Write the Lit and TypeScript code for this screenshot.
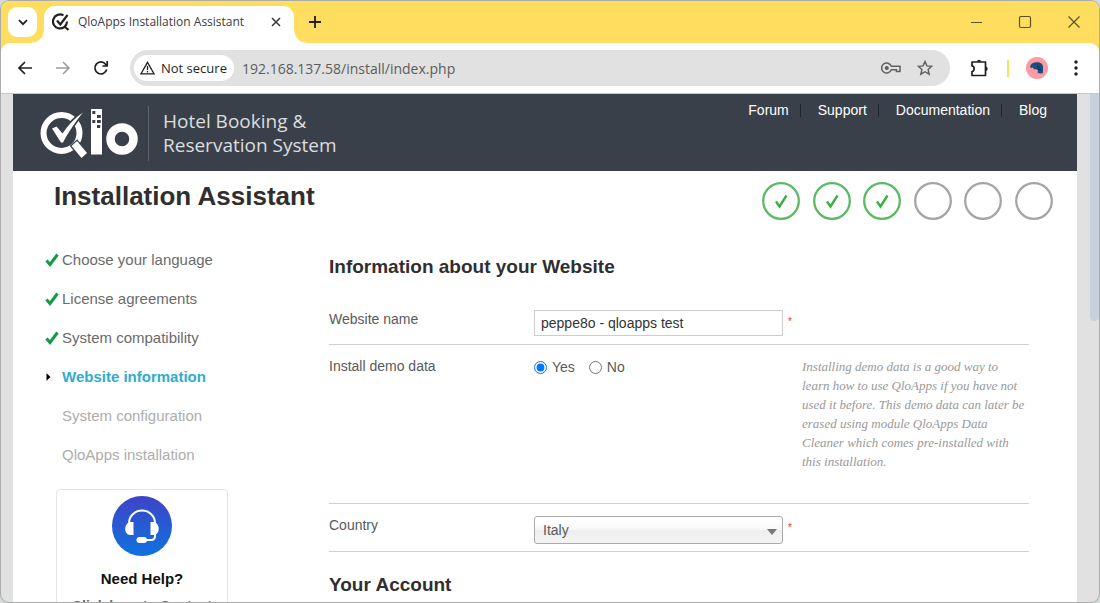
import { LitElement, html, css, svg } from "lit";
import { customElement, state } from "lit/decorators.js";

const tick = svg`<path d="M1.500 7.500L5 11.500L12.500 1.500" fill="none" stroke="#169b45" stroke-width="3"/>`;

@customElement("browser-bar")
class BrowserBar extends LitElement {
  static styles = css`
    :host { display: block; font-family: "Open Sans", "Noto Sans", sans-serif; color: #1f1f1f; background: #ffdd5f; }
    button { border: 0; padding: 0; background: none; display: flex; align-items: center; justify-content: center; color: inherit; font: inherit; }
    svg { display: block; flex: none; }
    .tabs { display: flex; align-items: flex-start; height: 42px; padding: 0 18px 0 7px; box-sizing: border-box; }
    .menu { width: 29px; height: 30px; margin-top: 6px; border-radius: 9px; background: #fff; }
    .tab { position: relative; display: flex; align-items: center; width: 250px; height: 37px; margin: 5px 0 0 7px; padding: 0 13px 5px 8px; box-sizing: border-box; background: #fff; border-radius: 11px 11px 0 0; font-size: 12px; color: #3c3c3c; }
    .tab::before, .tab::after { content: ""; position: absolute; bottom: 0; width: 12px; height: 12px; }
    .tab::before { left: -12px; background: radial-gradient(circle at 0 0, transparent 11px, #fff 12px); }
    .tab::after { right: -12px; background: radial-gradient(circle at 100% 0, transparent 11px, #fff 12px); }
    .name { flex: 1; margin-left: 8px; white-space: nowrap; }
    .plus { width: 20px; height: 42px; margin-left: 11px; }
    .win { display: flex; margin-left: auto; gap: 35px; height: 42px; color: #5d5124; }
    .tools { display: flex; align-items: center; height: 51px; padding: 0 19px 0 16px; box-sizing: border-box; background: #fff; border-radius: 9px 9px 0 0; border-bottom: 1px solid #c9c9c9; }
    .nav { display: flex; gap: 22px; }
    .address { flex: 1; min-width: 0; display: flex; align-items: center; height: 36px; margin: 0 20px 0 21px; padding: 0 17px 0 4px; border-radius: 18px; background: #e1e1e1; box-sizing: border-box; }
    .chip { display: flex; align-items: center; gap: 6px; height: 26px; padding: 0 7px 0 6px; border-radius: 13px; background: #fff; font-size: 13px; white-space: nowrap; }
    .url { flex: 1; min-width: 0; margin-left: 8px; border: 0; padding: 0; background: none; color: #5c5c5c; font: 14px "Open Sans", "Noto Sans", sans-serif; }
    .actions { display: flex; gap: 16px; }
    .split { width: 2px; height: 17px; margin: 0 17px 0 18px; background: #ffdd5f; }
    .more { margin-left: 24px; }
  `;
  render() {
    return html`
      <div class="tabs">
        <button class="menu" aria-label="Search tabs"><svg width="10" height="7" viewBox="0 0 10 7"><path d="M1 1.2l4 4 4-4" fill="none" stroke="currentColor" stroke-width="1.8"/></svg></button>
        <div class="tab">
          <svg width="18" height="18" viewBox="0 0 18 18" fill="none" stroke="#222" stroke-width="2.2"><path d="M11.5 2.4A7 7 0 1 0 15 8.5M12 13l4.5 4"/><path d="M5 7.5l3.3 4L15.5 2" /></svg>
          <span class="name">QloApps Installation Assistant</span>
          <button aria-label="Close tab"><svg width="10" height="10" viewBox="0 0 10 10"><path d="M1 1l8 8M9 1l-8 8" stroke="currentColor" stroke-width="1.6"/></svg></button>
        </div>
        <button class="plus" aria-label="New tab"><svg width="12" height="12" viewBox="0 0 12 12"><path d="M6 0v12M0 6h12" stroke="currentColor" stroke-width="1.8"/></svg></button>
        <div class="win">
          <button aria-label="Minimize"><svg width="13" height="13" viewBox="0 0 13 13"><path d="M1 6.5h11" stroke="currentColor"/></svg></button>
          <button aria-label="Maximize"><svg width="14" height="14" viewBox="0 0 14 14"><rect x="1.5" y="1.5" width="11" height="11" rx="1.5" fill="none" stroke="currentColor" stroke-width="1.2"/></svg></button>
          <button aria-label="Close"><svg width="14" height="14" viewBox="0 0 14 14"><path d="M1.5 1.5l11 11M12.5 1.5l-11 11" stroke="currentColor" stroke-width="1.2"/></svg></button>
        </div>
      </div>
      <div class="tools">
        <div class="nav">
          <button aria-label="Back"><svg width="16" height="16" viewBox="0 0 16 16"><path d="M8 2L2 8l6 6M2 8h13" fill="none" stroke="currentColor" stroke-width="1.7"/></svg></button>
          <button aria-label="Forward"><svg width="16" height="16" viewBox="0 0 16 16"><path d="M8 2l6 6-6 6M14 8H1" fill="none" stroke="#9c9c9c" stroke-width="1.6"/></svg></button>
          <button aria-label="Reload"><svg width="16" height="16" viewBox="0 0 16 16"><path d="M13.7 9.6A6 6 0 1 1 12.6 4.2L14 5.8M14.2 1v5H9.4" fill="none" stroke="currentColor" stroke-width="1.7"/></svg></button>
        </div>
        <div class="address">
          <button class="chip"><svg width="15" height="14" viewBox="0 0 15 14"><path d="M7.5 1.4L14 12.8H1z" fill="none" stroke="currentColor" stroke-width="1.3"/><path d="M7.5 5v4M7.5 10v1.4" stroke="currentColor" stroke-width="1.3"/></svg>Not secure</button>
          <input class="url" aria-label="Address" value="192.168.137.58/install/index.php" />
          <div class="actions">
            <button aria-label="Passwords"><svg width="20" height="12" viewBox="0 0 20 12" fill="none" stroke="#5f5f5f" stroke-width="1.5"><path d="M10.3 4.2H19v5.4h-3.6V7.8h-5.1A5 5 0 1 1 10.3 4.2z"/><circle cx="5.8" cy="6" r="1.3" fill="#5f5f5f"/></svg></button>
            <button aria-label="Bookmark"><svg width="16" height="16" viewBox="0 0 16 16"><path d="M8 1.5l1.9 4.4 4.8.4-3.6 3.2 1.1 4.7L8 11.7l-4.2 2.5 1.1-4.7L1.3 6.3l4.8-.4z" fill="none" stroke="#5f5f5f" stroke-width="1.4"/></svg></button>
          </div>
        </div>
        <button aria-label="Extensions"><svg width="19" height="18" viewBox="0 0 19 18"><path d="M2 3h13.5v13.5H2v-3.8c2.8-.4 2.8-5.4 0-5.8z" fill="none" stroke="currentColor" stroke-width="1.7" stroke-linejoin="round"/><path d="M7 2.8a2 2 0 0 1 4 0zM15.5 7.5a2.2 2.2 0 0 1 0 4.4z" fill="currentColor"/></svg></button>
        <div class="split"></div>
        <button aria-label="Profile"><svg width="22" height="22" viewBox="0 0 22 22"><circle cx="11" cy="11" r="11" fill="#fb9ca4"/><path d="M4 9.5C5 6 9 4.5 13 5.5c3 .5 4.5 3 4 6v4.5c-2 .8-4 .6-5.5-.5l.5-2-2-1.5-2 .5-1-2-2 .5z" fill="#1a4c7c"/><path d="M11 9l2.5 1.5M12 12.5h3" stroke="#10263f"/></svg></button>
        <button class="more" aria-label="Menu"><svg width="8" height="16" viewBox="0 0 8 16" fill="currentColor"><circle cx="4" cy="2" r="1.7"/><circle cx="4" cy="8" r="1.7"/><circle cx="4" cy="14" r="1.7"/></svg></button>
      </div>`;
  }
}

@customElement("site-header")
class SiteHeader extends LitElement {
  static styles = css`
    :host { display: flex; justify-content: space-between; height: 77px; padding: 0 30px 0 27px; box-sizing: border-box; background: #3a4049; color: #fff; }
    .brand { display: flex; align-items: center; padding-top: 1px; }
    .mark { display: block; }
    .slogan { margin: 0 0 0 10px; padding-left: 14px; border-left: 1px solid #5f656d; height: 55px; display: flex; align-items: center; font: 19px/24px "Open Sans", "Noto Sans", sans-serif; color: #dcdddf; white-space: nowrap; }
    nav { display: flex; align-items: center; height: 32px; font: 14px/16px "Liberation Sans", Arial, sans-serif; }
    a { color: #fff; text-decoration: none; padding-left: 17px; margin-left: 11px; border-left: 1px solid #20252b; line-height: 13px; }
    a:first-child { border: 0; }
  `;
  render() {
    return html`
      <div class="brand">
        <svg class="mark" width="98" height="50" viewBox="0 0 98 50" role="img" aria-label="Qlo">
          <circle cx="21.5" cy="25" r="18" fill="none" stroke="#fff" stroke-width="6"/>
          <path d="M31.5 38l5.5-5 10 12-5.5 5z" fill="#fff" stroke="#3a4049" stroke-width="2.5" paint-order="stroke"/>
          <path d="M12 20.5l4.5-2 6 7C28 17.5 34.5 10 43 4.5 36 13 28.5 24 23 34.5h-2z" fill="#fff" stroke="#3a4049" stroke-width="3.5" paint-order="stroke"/>
          <path d="M51 1h11v45.5H51z" fill="#fff"/>
          <path d="M52.3 3h3v3h-3zM57 7h3.8v3H57zM52.3 12h3v3h-3zM57 12h3.8v3H57zM57 17h3.2v3H57z" fill="#3a4049"/>
          <circle cx="82" cy="31" r="11.5" fill="none" stroke="#fff" stroke-width="8.5"/>
        </svg>
        <p class="slogan">Hotel Booking &amp;<br />Reservation System</p>
      </div>
      <nav>
        ${["Forum", "Support", "Documentation", "Blog"].map((t) => html`<a href="#">${t}</a>`)}
      </nav>`;
  }
}

@customElement("app-root")
class AppRoot extends LitElement {
  static styles = css`
    :host { display: block; background: #d5d9d8; font: 14px/18px "Liberation Sans", Arial, sans-serif; color: #585a5b; }
    * { box-sizing: border-box; }
    .window { display: flex; flex-direction: column; height: 100vh; border: 1px solid #ababab; border-radius: 9px; overflow: hidden; background: #e1e1e1; }
    .view { flex: 1; min-height: 0; display: flex; }
    .page { flex: 1; min-width: 0; margin: 0 13px 0 12px; background: #fff; overflow: hidden; }
    .scroll { width: 9px; }
    .thumb { height: 227px; border-radius: 0 0 5px 5px; background: #c5d1db; }
    .top { display: flex; justify-content: space-between; padding: 10px 24px 0 41px; }
    h1 { margin: 0; font-size: 26px; line-height: 30px; color: #2f2f2f; }
    h2 { margin: 0; font-size: 19px; line-height: 24px; color: #2f2f2f; }
    .progress { display: flex; justify-content: space-between; width: 291px; margin: 0; padding: 1px 0 0; list-style: none; }
    .progress svg { display: block; }
    .body { display: flex; gap: 101px; padding: 20px 48px 0 32px; }
    aside { flex: none; width: 183px; }
    .steps { margin: 0; padding: 0; list-style: none; font-size: 15px; }
    .steps li { display: flex; align-items: center; gap: 3px; height: 39px; color: #adadad; white-space: nowrap; }
    .steps .done { color: #6b6b6b; }
    .steps .now { color: #2fadcf; font-weight: bold; }
    .slot { display: block; width: 14px; height: 14px; }
    .help { margin: 15px 0 0 11px; height: 180px; padding-top: 6px; border: 1px solid #e5e5e5; border-radius: 4px; text-align: center; color: #6b6b6b; }
    .help svg { display: block; margin: 0 auto 14px; }
    .help strong { display: block; font-size: 15px; color: #111; margin-bottom: 9px; }
    form { flex: 1; min-width: 0; padding-top: 15px; }
    .row { display: grid; grid-template-columns: 205px 1fr 227px; border-bottom: 1px solid #cfcfcf; }
    .site { height: 66px; padding-top: 31px; }
    .demo { height: 159px; padding-top: 12px; }
    .land { height: 48px; padding-top: 12px; }
    .field { display: flex; align-items: flex-start; gap: 5px; }
    .text { width: 249px; height: 26px; padding: 0 6px; border: 1px solid #ccc; color: #333; font: 14px "Liberation Sans", Arial, sans-serif; }
    .pick { position: relative; width: 249px; }
    select { display: block; width: 100%; height: 28px; padding: 0 8px; border: 1px solid #aaa; border-radius: 3px; appearance: none; color: #585a5b; font: 14px "Liberation Sans", Arial, sans-serif; background: linear-gradient(#fff 20%, #f6f6f6 50%, #eee 52%, #f4f4f4); }
    .arrow { position: absolute; right: 6px; top: 13px; pointer-events: none; }
    .req { color: #e33; font-size: 10px; line-height: 24px; }
    .radio { display: flex; align-items: center; gap: 5px; margin-right: 9px; line-height: 20px; }
    .radio input { width: 13px; height: 13px; margin: 1px 0 0; accent-color: #0075ff; }
    .note { margin: 0; font: italic 13px/19px Georgia, "Liberation Serif", serif; color: #999; white-space: nowrap; }
    .account { margin-top: 21px; }
  `;

  @state() private demo = true;

  private steps: [string, string][] = [
    ["Choose your language", "done"],
    ["License agreements", "done"],
    ["System compatibility", "done"],
    ["Website information", "now"],
    ["System configuration", ""],
    ["QloApps installation", ""],
  ];

  render() {
    return html`
      <div class="window">
        <browser-bar></browser-bar>
        <div class="view">
          <main class="page">
            <site-header></site-header>
            <div class="top">
              <h1>Installation Assistant</h1>
              <ol class="progress">
                ${this.steps.map(([, s]) => html`<li><svg width="38" height="38" viewBox="0 0 38 38" fill="none">
                  <circle cx="19" cy="19" r="17.8" stroke=${s === "done" ? "#5cb965" : "#a5a5a8"} stroke-width="2.3"/>
                  ${s === "done" ? svg`<path d="M14 19.5l3.5 5L24.5 13.5" stroke="#3fae49" stroke-width="2.4"/>` : ""}
                </svg></li>`)}
              </ol>
            </div>
            <div class="body">
              <aside>
                <ul class="steps">
                  ${this.steps.map(([t, s]) => html`<li class=${s}><svg class="slot" viewBox="0 0 14 14">
                    ${s === "done" ? tick : s === "now" ? svg`<path d="M1.5 3.2L5.5 7L1.5 10.8z" fill="#000"/>` : ""}
                  </svg>${t}</li>`)}
                </ul>
                <div class="help">
                  <svg width="60" height="60" viewBox="0 0 60 60">
                    <defs><linearGradient id="blue" x2="0" y2="1"><stop stop-color="#3f43c6"/><stop offset="1" stop-color="#0f72df"/></linearGradient></defs>
                    <circle cx="30" cy="30" r="30" fill="url(#blue)"/>
                    <path d="M17 27a13 12.5 0 0 1 26 0M43 38v2q0 4-4 4h-5" fill="none" stroke="#fff" stroke-width="2"/>
                    <rect x="24.5" y="41" width="10.5" height="6" rx="3" fill="#fff"/>
                    <path d="M21.5 26v13h-3c-7 0-7-12 0-13zM38.5 26v13h3c7 0 7-12 0-13z" fill="#fff"/>
                  </svg>
                  <strong>Need Help?</strong>
                  <b>Click here to Contact</b>
                </div>
              </aside>
              <form>
                <h2>Information about your Website</h2>
                <div class="row site">
                  <label for="site">Website name</label>
                  <div class="field"><input class="text" id="site" value="peppe8o - qloapps test" /><span class="req">*</span></div>
                </div>
                <div class="row demo" role="radiogroup" aria-labelledby="demo">
                  <span id="demo">Install demo data</span>
                  <div class="field">
                    <label class="radio"><input type="radio" name="demo" .checked=${this.demo} @change=${() => (this.demo = true)} />Yes</label>
                    <label class="radio"><input type="radio" name="demo" .checked=${!this.demo} @change=${() => (this.demo = false)} />No</label>
                  </div>
                  <p class="note">Installing demo data is a good way to<br />learn how to use QloApps if you have not<br />used it before. This demo data can later be<br />erased using module QloApps Data<br />Cleaner which comes pre-installed with<br />this installation.</p>
                </div>
                <div class="row land">
                  <label for="land">Country</label>
                  <div class="field">
                    <div class="pick"><select id="land"><option>Italy</option></select><svg class="arrow" width="10" height="6" viewBox="0 0 10 6"><path d="M0 0h10L5 6z" fill="#777"/></svg></div>
                    <span class="req">*</span>
                  </div>
                </div>
                <h2 class="account">Your Account</h2>
              </form>
            </div>
          </main>
          <div class="scroll"><div class="thumb"></div></div>
        </div>
      </div>`;
  }
}
